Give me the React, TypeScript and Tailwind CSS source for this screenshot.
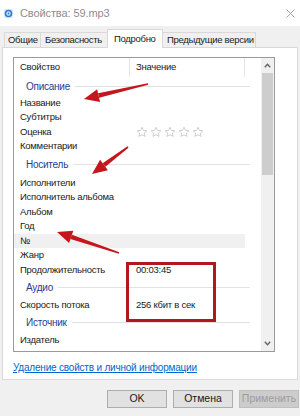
import React from 'react'

type Item =
  | { kind: 'group'; label: string; h: string }
  | { kind: 'row'; label: string; value?: string; stars?: boolean; hl?: boolean }

const items: Item[] = [
  { kind: 'group', label: 'Описание', h: 'h-[18.5px]' },
  { kind: 'row', label: 'Название' },
  { kind: 'row', label: 'Субтитры' },
  { kind: 'row', label: 'Оценка', stars: true },
  { kind: 'row', label: 'Комментарии' },
  { kind: 'group', label: 'Носитель', h: 'h-[22px]' },
  { kind: 'row', label: 'Исполнители' },
  { kind: 'row', label: 'Исполнитель альбома' },
  { kind: 'row', label: 'Альбом' },
  { kind: 'row', label: 'Год' },
  { kind: 'row', label: '№', hl: true },
  { kind: 'row', label: 'Жанр' },
  { kind: 'row', label: 'Продолжительность', value: '00:03:45' },
  { kind: 'group', label: 'Аудио', h: 'h-[20.5px]' },
  { kind: 'row', label: 'Скорость потока', value: '256 кбит в сек' },
  { kind: 'group', label: 'Источник', h: 'h-[20.5px]' },
  { kind: 'row', label: 'Издатель' },
]

const Star = () => (
  <svg width="12" height="12" viewBox="0 0 24 24" className="shrink-0">
    <path
      d="M12 2.5l2.9 6.3 6.8.7-5.1 4.6 1.5 6.7L12 17.4l-6.1 3.4 1.5-6.7-5.1-4.6 6.8-.7z"
      fill="none"
      stroke="#c4c4c4"
      strokeWidth="1.6"
      strokeLinejoin="round"
    />
  </svg>
)

const Arrow = ({ x1, y1, x2, y2 }: { x1: number; y1: number; x2: number; y2: number }) => {
  const dx = x2 - x1
  const dy = y2 - y1
  const len = Math.hypot(dx, dy)
  const ux = dx / len
  const uy = dy / len
  const head = 15
  const bx = x2 - ux * head
  const by = y2 - uy * head
  const px = -uy * 6.5
  const py = ux * 6.5
  return (
    <g fill="#c4161c">
      <polygon points={`${x1 - uy * 0.8},${y1 + ux * 0.8} ${x1 + uy * 0.8},${y1 - ux * 0.8} ${bx - px * 0.35},${by - py * 0.35} ${bx + px * 0.35},${by + py * 0.35}`} />
      <polygon points={`${x2},${y2} ${bx + px},${by + py} ${bx - px},${by - py}`} />
    </g>
  )
}

export default function App() {
  return (
    <div
      className="relative w-[300px] h-[416px] overflow-hidden bg-[#f0f0f0] text-[#1a1a1a]"
      style={{ fontFamily: '"Liberation Sans", Arial, sans-serif' }}
    >
      {/* title bar */}
      <div className="h-[26px] bg-white flex items-center pl-[4px] pr-[5px]">
        <svg width="9" height="9" viewBox="0 0 9 9" className="mr-[7px]">
          <rect x="0" y="0" width="9" height="9" rx="1" fill="#dbe9f7" />
          <circle cx="4.5" cy="4.5" r="3" fill="none" stroke="#2b7bd3" strokeWidth="1.6" />
          <circle cx="4.5" cy="4.5" r="0.9" fill="#2b7bd3" />
        </svg>
        <span className="text-[11px] text-[#8d8d8d] tracking-[-0.1px]">Свойства: 59.mp3</span>
        <svg width="9" height="9" viewBox="0 0 9 9" className="ml-auto">
          <path d="M0.5 0.5l8 8M8.5 0.5l-8 8" stroke="#9a9a9a" strokeWidth="0.9" />
        </svg>
      </div>

      {/* tabs */}
      <div className="h-[21px] flex items-end pl-[4px] text-[9.5px] tracking-[-0.3px] whitespace-nowrap">
        <div className="h-[15px] px-[3px] flex items-center border border-b-0 border-[#d9d9d9] bg-[#f0f0f0] w-[37px]">Общие</div>
        <div className="h-[15px] px-[4px] flex items-center border border-b-0 border-l-0 border-[#d9d9d9] bg-[#f0f0f0] w-[67px]">Безопасность</div>
        <div className="relative z-10 h-[19px] -mb-px px-[6px] flex items-center border border-b-0 border-[#d9d9d9] bg-white w-[56px] -ml-px">Подробно</div>
        <div className="h-[15px] px-[4px] flex items-center border border-b-0 border-l-0 border-[#d9d9d9] bg-[#f0f0f0] w-[93px]">Предыдущие версии</div>
      </div>

      {/* panel */}
      <div className="ml-[2px] w-[296px] h-[333px] bg-white border border-[#d9d9d9] pt-[9px] pl-[10px]">
        <div className="w-[262px] h-[295px] border border-[#9a9a9a] flex text-[9.5px] tracking-[-0.25px]">
          <div className="w-[247px] flex flex-col">
            <div className="h-[19px] flex shrink-0">
              <div className="w-[116px] pl-[6px] flex items-center border-r border-[#e5e5e5]">Свойство</div>
              <div className="w-[115px] pl-[6px] flex items-center border-r border-[#e5e5e5]">Значение</div>
            </div>
            {items.map((it, i) =>
              it.kind === 'group' ? (
                <div key={i} className={`${it.h} w-[236px] flex items-center pl-[12px] shrink-0`}>
                  <span className="text-[#1f3d8f] text-[10px]">{it.label}</span>
                  <div className="flex-1 ml-[5px] h-px bg-[#e2e2e2]" />
                </div>
              ) : (
                <div
                  key={i}
                  className={`h-[14.5px] flex items-center shrink-0 ${it.hl ? 'w-[231px] bg-[#f0f0f0]' : ''}`}
                >
                  <div className="w-[116px] pl-[6px] whitespace-nowrap">{it.label}</div>
                  <div className="pl-[6px] flex items-center gap-[2px]">
                    {it.stars ? (
                      <>
                        <Star />
                        <Star />
                        <Star />
                        <Star />
                        <Star />
                      </>
                    ) : (
                      it.value
                    )}
                  </div>
                </div>
              )
            )}
          </div>
          {/* scrollbar */}
          <div className="w-[13px] bg-[#f0f0f0] flex flex-col">
            <div className="h-[15px] flex items-center justify-center">
              <svg width="7" height="5" viewBox="0 0 7 5">
                <path d="M0.8 4.2L3.5 1.3l2.7 2.9" fill="none" stroke="#606060" strokeWidth="1.3" />
              </svg>
            </div>
            <div className="mx-[1px] h-[102px] bg-[#cdcdcd]" />
            <div className="flex-1" />
            <div className="h-[15px] flex items-center justify-center">
              <svg width="7" height="5" viewBox="0 0 7 5">
                <path d="M0.8 0.8L3.5 3.7l2.7-2.9" fill="none" stroke="#606060" strokeWidth="1.3" />
              </svg>
            </div>
          </div>
        </div>
        <div className="mt-[8px] text-[10px] tracking-[-0.2px] text-[#0066cc] underline">
          Удаление свойств и личной информации
        </div>
      </div>

      {/* buttons */}
      <div className="mt-[10px] flex justify-end gap-[6px] pr-[1px] text-[10.5px]">
        <div className="w-[60px] h-[18px] flex items-center justify-center bg-[#e1e1e1] border border-[#adadad]">OK</div>
        <div className="w-[60px] h-[18px] flex items-center justify-center bg-[#e1e1e1] border border-[#adadad]">Отмена</div>
        <div className="w-[60px] h-[18px] flex items-center justify-center bg-[#cccccc] border border-[#bfbfbf] text-[#9d9d9d]">Применить</div>
      </div>

      {/* annotations */}
      <div className="absolute left-[126px] top-[262px] w-[90px] h-[60px] border-[3px] border-[#b3161d]" />
      <svg className="absolute left-0 top-0 pointer-events-none" width="300" height="416">
        <Arrow x1={148} y1={84} x2={84} y2={99} />
        <Arrow x1={128} y1={147} x2={92} y2={174} />
        <Arrow x1={119} y1={253} x2={57} y2={232} />
      </svg>
    </div>
  )
}
